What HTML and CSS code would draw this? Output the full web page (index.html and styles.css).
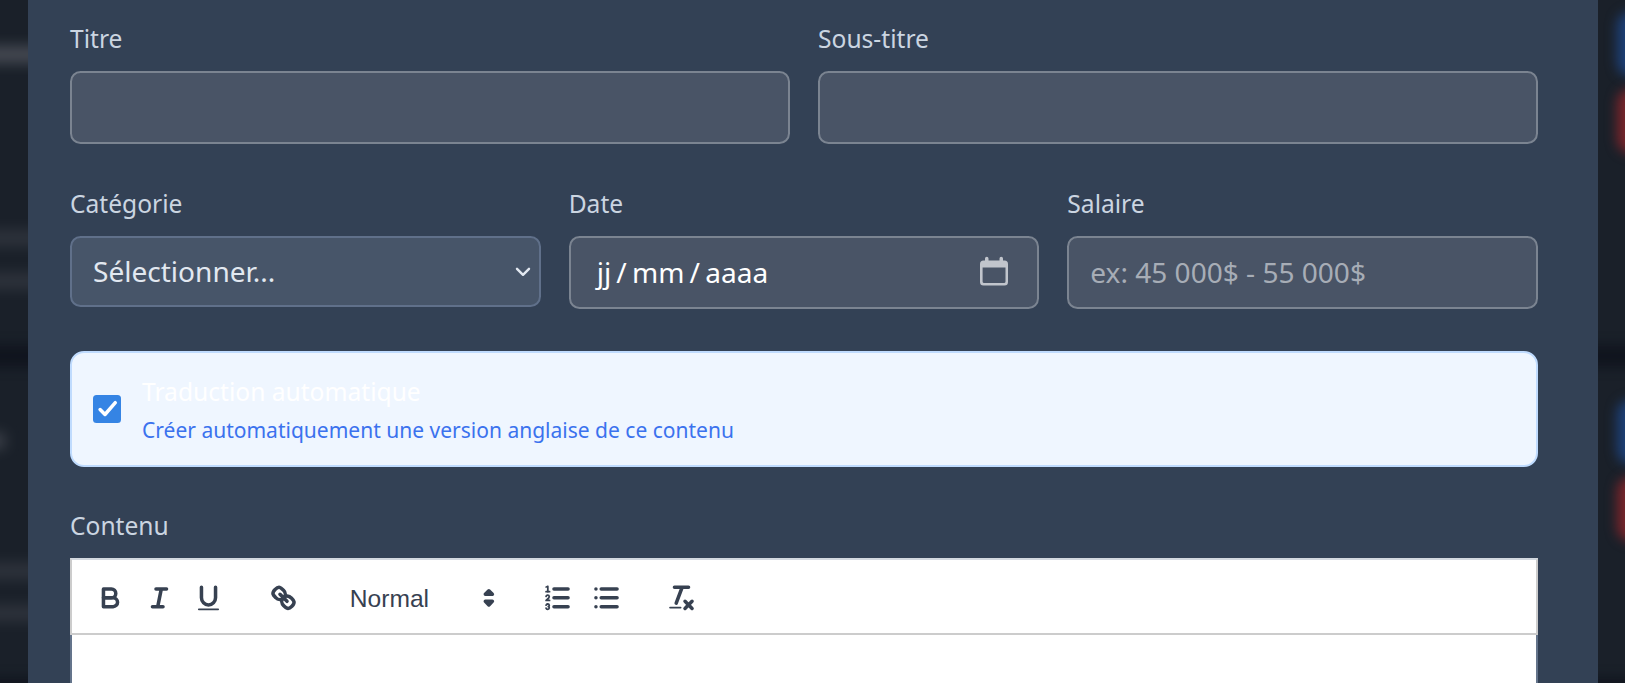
FILE: index.html
```
<!DOCTYPE html>
<html lang="fr">
<head>
<meta charset="utf-8">
<title>Contenu</title>
<link rel="stylesheet" href="styles.css">
</head>
<body>
<div class="backdrop" aria-hidden="true">
  <i class="band band-mid"></i><i class="band band-low"></i>
  <i class="smudge s1"></i><i class="smudge s2"></i><i class="smudge s3"></i><i class="smudge s4"></i><i class="smudge s5"></i><i class="smudge s6"></i>
  <i class="pill blue p1"></i><i class="pill red p2"></i><i class="pill blue p3"></i><i class="pill red p4"></i>
</div>
<main class="panel">
  <div class="row two">
    <div class="field"><span class="label">Titre</span><div class="input"></div></div>
    <div class="field"><span class="label">Sous-titre</span><div class="input"></div></div>
  </div>
  <div class="row three">
    <div class="field"><span class="label">Catégorie</span>
      <div class="input select"><span>Sélectionner...</span>
        <svg class="chevron" viewBox="0 0 16 10"><path d="M2 1.8 8 7.8 14 1.8"/></svg>
      </div>
    </div>
    <div class="field"><span class="label">Date</span>
      <div class="input date"><span class="parts"><span>jj</span><span>/</span><span>mm</span><span>/</span><span>aaaa</span></span>
        <svg class="calendar" viewBox="0 0 28 28"><path fill-rule="evenodd" d="M5 1.5a1.75 1.75 0 0 1 3.5 0V3.500h11V1.500a1.750 1.750 0 0 1 3.500 0V3.500h1.500a3.500 3.500 0 0 1 3.500 3.500V25a3.500 3.500 0 0 1-3.500 3.500H3.500A3.500 3.500 0 0 1 0 25V7a3.500 3.500 0 0 1 3.500-3.500H5ZM2.600 10.500V24.500a1.500 1.500 0 0 0 1.500 1.500H24a1.500 1.500 0 0 0 1.500-1.500V10.500Z"/></svg>
      </div>
    </div>
    <div class="field"><span class="label">Salaire</span><div class="input placeholder">ex: 45 000$ - 55 000$</div></div>
  </div>
  <div class="notice">
    <svg class="check" viewBox="0 0 28 28"><rect width="28" height="28" rx="3.500"/><path d="M7.100 14.500 12 19.500 22.300 7.700"/></svg>
    <div class="notice-text"><span class="notice-title">Traduction automatique</span><span class="notice-sub">Créer automatiquement une version anglaise de ce contenu</span></div>
  </div>
  <div class="field last"><span class="label">Contenu</span>
    <div class="editor">
      <div class="toolbar">
        <div class="group">
          <svg class="icon" viewBox="0 0 18 18"><path d="M5,4H9.500A2.500,2.500,0,0,1,12,6.500v0A2.500,2.500,0,0,1,9.500,9H5V4Z"/><path d="M5,9h5.500A2.500,2.500,0,0,1,13,11.500v0A2.500,2.500,0,0,1,10.500,14H5V9Z"/></svg>
          <svg class="icon" viewBox="0 0 18 18"><path d="M7 4H13M5 14H11M8 14 10 4"/></svg>
          <svg class="icon" viewBox="0 0 18 18"><path d="M5,3V9a4.012,4.012,0,0,0,4,4H9a4.012,4.012,0,0,0,4-4V3"/><rect class="fill" height="1" rx=".5" width="12" x="3" y="15"/></svg>
        </div>
        <div class="group">
          <svg class="icon" viewBox="0 0 18 18"><path d="M7 7 11 11"/><path d="M8.900,4.577a3.476,3.476,0,0,1,.36,4.679A3.476,3.476,0,0,1,4.577,8.900C3.185,7.500,2.035,6.400,4.217,4.217S7.500,3.185,8.900,4.577Z"/><path d="M13.423,9.100a3.476,3.476,0,0,0-4.679-.36,3.476,3.476,0,0,0,.36,4.679c1.392,1.392,2.500,2.542,4.679.36S14.815,10.500,13.423,9.100Z"/></svg>
        </div>
        <div class="group picker"><span>Normal</span>
          <svg class="arrows" viewBox="0 0 18 18"><path class="solid" d="M7 11 9 13 11 11ZM7 7 9 5 11 7Z"/></svg>
        </div>
        <div class="group">
          <svg class="icon" viewBox="0 0 18 18"><path d="M7 4H15M7 9H15M7 14H15"/><path class="thin" d="M2.500 5.500H4.500"/><path class="fill" d="M3.500,6A.5,.5,0,0,1,3,5.500V3.085l-.276,.138A.5,.5,0,0,1,2.053,3c-.124-.247-.023-.324,.224-.447l1-.5A.5,.5,0,0,1,4,2.500v3A.5,.5,0,0,1,3.500,6Z"/><path class="thin" d="M4.500,10.500h-2c0-.234,1.850-1.076,1.850-2.234A.959,.959,0,0,0,2.500,8.156"/><path class="thin" d="M2.500,14.846a.959,.959,0,0,0,1.850-.109A.7,.7,0,0,0,3.750,14a.688,.688,0,0,0,.6-.736,.959,.959,0,0,0-1.850-.109"/></svg>
          <svg class="icon" viewBox="0 0 18 18"><path d="M6 4H15M6 9H15M6 14H15M3 4H3.010M3 9H3.010M3 14H3.010"/></svg>
        </div>
        <div class="group">
          <svg class="icon" viewBox="0 0 18 18"><path d="M5 3H13M6 12 9.350 3M11 11 15 15M15 11 11 15"/><rect class="fill" height="1" rx=".5" width="7" x="2" y="14"/></svg>
        </div>
      </div>
      <div class="content"></div>
    </div>
  </div>
</main>
</body>
</html>
```

FILE: styles.css
```
* { box-sizing: border-box; }
html, body { height: 100%; }
body {
  margin: 0;
  overflow: hidden;
  position: relative;
  background: #1a2029;
  font-family: "Noto Sans", sans-serif;
}
.backdrop { position: absolute; inset: 0; overflow: hidden; }
.backdrop i { position: absolute; display: block; }
.band { left: -20px; right: -20px; background: #10141e; filter: blur(6px); }
.band-mid { top: 345px; height: 22px; }
.band-low { top: 678px; height: 30px; }
.smudge { left: -20px; width: 70px; height: 16px; background: #565962; filter: blur(7px); opacity: .75; }
.s1 { top: 46px; height: 17px; }
.s2 { top: 230px; opacity: .35; }
.s3 { top: 273px; opacity: .35; }
.s4 { top: 433px; width: 25px; opacity: .6; }
.s5 { top: 563px; opacity: .35; }
.s6 { top: 605px; opacity: .35; }
.pill { left: 1617px; width: 80px; height: 64px; border-radius: 14px; filter: blur(6px); }
.blue { background: #1d4078; }
.red { background: #79242a; }
.p1 { top: 12px; }
.p2 { top: 89px; }
.p3 { top: 400px; }
.p4 { top: 477px; }

.panel {
  position: relative;
  height: 683px;
  margin: 0 27px 0 28px;
  padding: 21px 60px 0 42px;
  background: #334155;
  overflow: hidden;
  display: flex;
  flex-direction: column;
  gap: 42px;
}
.panel > * { flex-shrink: 0; }
.row { display: grid; gap: 28px; align-items: start; }
.two { grid-template-columns: repeat(2, 1fr); }
.three { grid-template-columns: repeat(3, 1fr); }
.field { display: flex; flex-direction: column; gap: 15px; }
.last { margin-top: -1px; }
.label { font-size: 24.600px; line-height: 35px; color: #cbd5e1; }
.input {
  height: 73px;
  border: 2px solid #7b8491;
  border-radius: 10.500px;
  background: #495466;
  display: flex;
  align-items: center;
  justify-content: space-between;
  font-size: 28.050px;
  color: #fff;
}
.select { height: 70.500px; padding: 0 8px 0 21px; background: #475569; border-color: #60708a; color: #e2e8f0; }
.chevron { width: 16px; height: 10px; margin-top: 1px; }
.chevron path { fill: none; stroke: #e2e8f0; stroke-width: 2.400; stroke-linecap: round; stroke-linejoin: round; }
.date { padding: 0 29px 0 26px; }
.parts { display: flex; gap: 5.200px; }
.calendar { width: 28px; height: 28px; overflow: visible; fill: #c1c5cc; margin-top: -3px; }
.date, .placeholder { padding-bottom: 1px; }
.placeholder { padding-left: 21px; color: #a7adb6; }

.notice {
  height: 116px;
  padding-left: 21px;
  border: 2px solid #bfdbfe;
  border-radius: 14px;
  background: #eff6ff;
  display: flex;
  align-items: center;
  gap: 21px;
}
.check { width: 28px; height: 28px; }
.check rect { fill: #3584e4; }
.check path { fill: none; stroke: #fff; stroke-width: 3.500; stroke-linecap: round; stroke-linejoin: round; }
.notice-text { display: flex; flex-direction: column; gap: 7px; }
.notice-title { font-size: 24.600px; line-height: 35px; color: #fff; }
.notice-sub { font-size: 21.020px; line-height: 28px; color: #3b72ee; }

.toolbar {
  height: 77px;
  padding: 3px 14px 0;
  border: 2px solid #ccc;
  border-top-color: #d3d8df;
  background: #fff;
  display: flex;
  align-items: center;
  gap: 26.400px;
}
.group { display: flex; align-items: center; }
.icon { width: 49px; height: 31.700px; padding: 0 8.650px; }
.icon path, .arrows path { fill: none; stroke: #374151; stroke-width: 2; stroke-linecap: round; stroke-linejoin: round; }
.icon .thin { stroke-width: 1; }
.icon .fill { fill: #374151; stroke: none; }
.arrows { width: 31.700px; height: 31.700px; }
.arrows .solid { fill: #374151; }
.picker { width: 171.500px; padding: 0 1.500px 0 15px; justify-content: space-between; font: 24.600px "Liberation Sans", sans-serif; color: #374151; }
.picker span { padding-top: 2px; }
.content { height: 60px; background: #fff; border: solid #64748b; border-width: 0 2px; }
```
